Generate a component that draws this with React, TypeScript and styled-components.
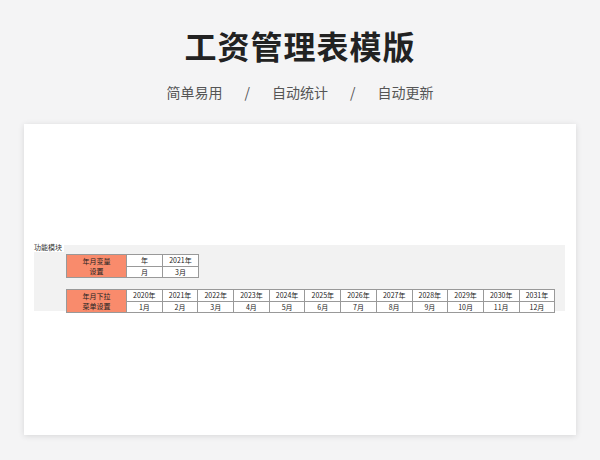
import React from "react";
import styled, { createGlobalStyle } from "styled-components";

const Global = createGlobalStyle`
  body { margin: 0; background: #f4f4f5; font-family: "Noto Sans CJK SC", "Noto Sans", sans-serif; }
`;

const Page = styled.div`
  width: 600px;
  height: 460px;
  display: flex;
  flex-direction: column;
  align-items: center;
`;

const Title = styled.h1`
  margin: 22px 0 0;
  height: 46px;
  font-size: 32px;
  font-weight: 700;
  color: #222;
  letter-spacing: 1px;
`;

const Sub = styled.div`
  margin-top: 14px;
  font-size: 14px;
  color: #555;
  display: flex;
  gap: 22px;
`;

const Card = styled.div`
  margin-top: 22px;
  width: 552px;
  height: 311px;
  background: #fff;
  box-shadow: 0 1px 6px rgba(0, 0, 0, 0.12);
  padding: 121px 10px 0;
  box-sizing: border-box;
`;

const Band = styled.div`
  position: relative;
  width: 531px;
  height: 66px;
  background: #f2f2f2;
  padding: 9px 0 0 32px;
  box-sizing: border-box;
`;

const Label = styled.div`
  position: absolute;
  left: 0;
  top: -2px;
  font-size: 7px;
  line-height: 9px;
  background: #fff;
  color: #333;
  padding-right: 2px;
`;

const Grid = styled.div<{ $cols: number; $w: number }>`
  display: grid;
  grid-template-columns: 60px repeat(${(p) => p.$cols}, ${(p) => p.$w}px);
  grid-template-rows: 11.5px 11.5px;
  width: max-content;
  border-top: 1px solid #999;
  border-left: 1px solid #999;
  margin-bottom: 11px;
`;

const Cell = styled.div<{ $head?: boolean }>`
  grid-row: ${(p) => (p.$head ? "span 2" : "auto")};
  background: ${(p) => (p.$head ? "#f98b6c" : "#fff")};
  border-right: 1px solid #999;
  border-bottom: 1px solid #999;
  font-size: 7px;
  line-height: 10.5px;
  color: #222;
  text-align: center;
  display: flex;
  flex-direction: column;
  justify-content: center;
`;

const years = Array.from({ length: 12 }, (_, i) => `${2020 + i}年`);
const months = Array.from({ length: 12 }, (_, i) => `${i + 1}月`);

export default function App() {
  return (
    <Page>
      <Global />
      <Title>工资管理表模版</Title>
      <Sub>
        <span>简单易用</span>
        <span>/</span>
        <span>自动统计</span>
        <span>/</span>
        <span>自动更新</span>
      </Sub>
      <Card>
        <Band>
          <Label>功能模块</Label>
          <Grid $cols={2} $w={36}>
            <Cell $head>
              <span>年月变量</span>
              <span>设置</span>
            </Cell>
            <Cell>年</Cell>
            <Cell>2021年</Cell>
            <Cell>月</Cell>
            <Cell>3月</Cell>
          </Grid>
          <Grid $cols={12} $w={35.7}>
            <Cell $head>
              <span>年月下拉</span>
              <span>菜单设置</span>
            </Cell>
            {years.map((y) => (
              <Cell key={y}>{y}</Cell>
            ))}
            {months.map((m) => (
              <Cell key={m}>{m}</Cell>
            ))}
          </Grid>
        </Band>
      </Card>
    </Page>
  );
}
